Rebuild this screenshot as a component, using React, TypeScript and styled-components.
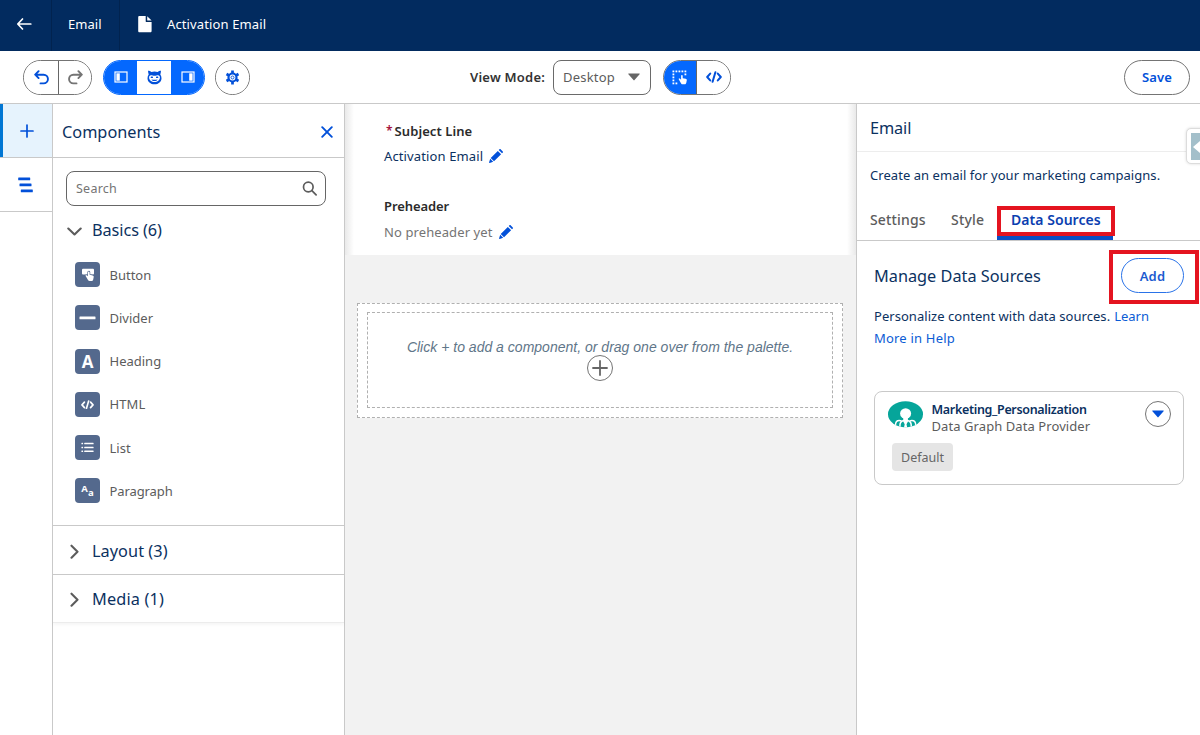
import React from "react";
import styled, { createGlobalStyle, css } from "styled-components";

const Global = createGlobalStyle`
  * { box-sizing: border-box; }
  body { margin: 0; background: #fff; font-family: "Noto Sans", "Open Sans", sans-serif; overflow: hidden; }
  button { font: inherit; margin: 0; padding: 0; background: none; border: 0; }
  svg { display: block; flex: none; }
`;

const navy = "#0b315f";
const blue = "#0250d9";
const bright = "#0468fe";
const grey = "#5c5c5c";
const line = "#c9c9c9";

const Text = styled.span<{ $size?: number; $weight?: number; $color?: string; $track?: number; $lh?: number }>`
  display: block;
  white-space: nowrap;
  font-size: ${(p) => p.$size ?? 13}px;
  font-weight: ${(p) => p.$weight ?? 400};
  color: ${(p) => p.$color ?? navy};
  letter-spacing: ${(p) => p.$track ?? 0}px;
  line-height: ${(p) => p.$lh ?? 20}px;
`;

const Page = styled.div`
  width: 1200px;
  height: 735px;
  display: flex;
  flex-direction: column;
  overflow: hidden;
`;

const TopBar = styled.header`
  height: 51px;
  flex: none;
  display: flex;
  background: #022b5f;
`;

const TopCell = styled.div<{ $width?: number; $last?: boolean }>`
  width: ${(p) => (p.$width ? `${p.$width}px` : "auto")};
  display: flex;
  align-items: center;
  padding: 0 0 3px 16px;
  gap: 14px;
  border-right: ${(p) => (p.$last ? "0" : "1px solid #01234f")};
`;

const Toolbar = styled.div`
  height: 53px;
  flex: none;
  display: flex;
  align-items: center;
  padding: 0 10px 0 23px;
  border-bottom: 1px solid ${line};
`;

const Group = styled.div<{ $left?: number; $blue?: boolean }>`
  height: 35px;
  display: flex;
  margin-left: ${(p) => p.$left ?? 0}px;
  border: 1px solid ${(p) => (p.$blue ? bright : "#747474")};
  border-radius: 18px;
  overflow: hidden;
`;

const GroupButton = styled.button<{ $on?: boolean; $width?: number; $rule?: boolean }>`
  width: ${(p) => p.$width ?? 33}px;
  display: flex;
  align-items: center;
  justify-content: center;
  background: ${(p) => (p.$on ? bright : "#fff")};
  color: ${(p) => (p.$on ? "#fff" : blue)};
  border-right: ${(p) => (p.$rule ? "1px solid #666" : "0")};
`;

const ViewLabel = styled.div`
  margin-left: 220px;
  width: 83px;
`;

const Select = styled.div`
  width: 98px;
  height: 35px;
  display: flex;
  align-items: center;
  justify-content: space-between;
  padding: 0 10px 0 9px;
  border: 1px solid #6a6a6a;
  border-radius: 8px;
`;

const Pill = styled.button<{ $width: number; $color: string }>`
  width: ${(p) => p.$width}px;
  height: 35px;
  display: flex;
  align-items: center;
  justify-content: center;
  border: 1px solid ${(p) => p.$color};
  border-radius: 18px;
`;

const Spacer = styled.div`
  flex: 1;
`;

const Body = styled.div`
  flex: 1;
  display: flex;
  min-height: 0;
`;

const Rail = styled.nav`
  width: 53px;
  border-right: 1px solid ${line};
`;

const RailItem = styled.div<{ $active?: boolean }>`
  height: 54px;
  display: flex;
  align-items: center;
  justify-content: center;
  border-bottom: 1px solid ${line};
  box-shadow: ${(p) => (p.$active ? "inset 3px 0 #0176d3" : "none")};
  background: ${(p) => (p.$active ? "#e6f3fd" : "#fff")};
  padding: 0 2px 0 ${(p) => (p.$active ? 4 : 0)}px;
`;

const Palette = styled.aside`
  width: 292px;
  border-right: 1px solid ${line};
`;

const PaletteHead = styled.div`
  height: 54px;
  display: flex;
  align-items: center;
  justify-content: space-between;
  padding: 2px 11px 0 9px;
  border-bottom: 1px solid ${line};
`;

const SearchBox = styled.div`
  height: 35px;
  margin: 13px 18px 0 13px;
  display: flex;
  align-items: center;
  justify-content: space-between;
  padding: 0 8px 0 9px;
  border: 1px solid #666;
  border-radius: 8px;
`;

const Section = styled.section<{ $last?: boolean }>`
  border-bottom: 1px solid ${(p) => (p.$last ? "#ececec" : line)};
  ${(p) => p.$last && css`box-shadow: 0 2px 3px rgba(0, 0, 0, 0.04);`}
`;

const SectionHead = styled.div<{ $height: number; $drop?: number }>`
  height: ${(p) => p.$height}px;
  display: flex;
  align-items: center;
  gap: 10px;
  padding: ${(p) => p.$drop ?? 0}px 0 0 14px;
`;

const ItemList = styled.div`
  height: 272px;
  padding: 0 0 0 22px;
`;

const Item = styled.div`
  height: 43.25px;
  display: flex;
  align-items: center;
  gap: 9.5px;
`;

const ItemIcon = styled.div`
  width: 25px;
  height: 25px;
  display: flex;
  align-items: center;
  justify-content: center;
  border-radius: 4px;
  background: #54698d;
  color: #fff;
`;

const Glyph = styled.span<{ $size: number; $drop?: number; $lift?: number }>`
  font: 700 ${(p) => p.$size}px/1 "Open Sans", sans-serif;
  padding: ${(p) => p.$drop ?? 0}px 0 ${(p) => p.$lift ?? 0}px;
`;

const Canvas = styled.main`
  width: 511px;
  background: #f2f2f2;
`;

const Subject = styled.div`
  height: 151px;
  background: linear-gradient(to right, #e9e9e9, #fff 9px, #fff 502px, #e9e9e9);
  padding: 17px 39px;
`;

const Line = styled.div<{ $top?: number; $gap?: number }>`
  display: flex;
  align-items: center;
  gap: ${(p) => p.$gap ?? 6}px;
  margin-top: ${(p) => p.$top ?? 0}px;
`;

const FieldMark = styled(Text)`
  padding-left: 2px;
`;

const DropOuter = styled.div`
  width: 486px;
  height: 115px;
  margin: 48px 0 0 12px;
  padding: 8px 9px;
  border: 1px dashed #b0b0b0;
  background: #fff;
`;

const DropInner = styled.div`
  height: 96px;
  display: flex;
  flex-direction: column;
  align-items: center;
  padding-top: 26px;
  border: 1px dashed #b0b0b0;
`;

const Hint = styled.div`
  font: italic 14px/16px "Liberation Sans", sans-serif;
  letter-spacing: 0.01px;
  color: #5f7689;
  white-space: nowrap;
`;

const RoundButton = styled.div`
  width: 26px;
  height: 26px;
  flex: none;
  display: flex;
  align-items: center;
  justify-content: center;
  border: 1px solid #747474;
  border-radius: 50%;
`;

const Inspector = styled.aside`
  position: relative;
  flex: 1;
  min-width: 0;
  border-left: 1px solid ${line};
`;

const InspectorHead = styled.div`
  height: 48px;
  padding: 14px 13px 0;
  border-bottom: 1px solid #ededed;
`;

const Description = styled.div`
  height: 54px;
  padding: 13px 13px 0;
`;

const Tabs = styled.div`
  height: 35px;
  display: flex;
  padding-left: 13px;
  border-bottom: 1px solid ${line};
`;

const Tab = styled.div<{ $width: number }>`
  width: ${(p) => p.$width}px;
  padding-top: 4px;
`;

const ActiveTab = styled.div`
  position: relative;
  width: 116px;
  height: 34px;
  padding: 4px 0 0 14px;
  border-bottom: 4px solid #0b4fc4;
`;

const Callout = styled.div<{ $x: number; $y: number; $w: number; $h: number }>`
  position: absolute;
  left: ${(p) => p.$x}px;
  top: ${(p) => p.$y}px;
  width: ${(p) => p.$w}px;
  height: ${(p) => p.$h}px;
  border: 4px solid #e41420;
`;

const Manage = styled.div`
  height: 61px;
  display: flex;
  align-items: center;
  justify-content: space-between;
  padding: 8px 16px 0 17px;
  position: relative;
`;

const Help = styled.div`
  padding: 4px 17px 0;
`;

const Card = styled.div`
  width: 310px;
  height: 94px;
  margin: 42px 0 0 17px;
  border: 1px solid ${line};
  border-radius: 8px;
  padding: 9px 12px 0 13px;
`;

const CardTop = styled.div`
  display: flex;
  height: 42px;
`;

const CardText = styled.div`
  flex: 1;
  padding-left: 8.5px;
`;

const Badge = styled.div`
  width: 61px;
  height: 28px;
  margin-left: 4px;
  padding-top: 1px;
  display: flex;
  align-items: center;
  justify-content: center;
  border-radius: 4px;
  background: #e5e5e5;
`;

const Flyout = styled.div`
  position: absolute;
  right: -6px;
  top: 24px;
  width: 20px;
  height: 36px;
  padding: 4px;
  background: #fff;
  border: 1px solid #dcdcdc;
  border-radius: 5px;
  box-shadow: 0 0 3px rgba(0, 0, 0, 0.15);
`;

const FlyoutFace = styled.div`
  height: 27px;
  background: #a3bfca;
  display: flex;
  align-items: center;
`;

const Pencil = () => (
  <svg width="15" height="15" viewBox="0 0 15 15" fill={blue}>
    <path d="M8.800 1.900l3.300 3.300-7.100 7.100-3.300-3.300z M9.700 1l.6-.6c.5-.5 1-.5 1.500 0l1.800 1.800c.5.500.5 1 0 1.500l-.6.600z M1.200 9.700l3 3-3.500 1.200c-.4.100-.7-.2-.6-.6z" />
  </svg>
);

const Code = ({ w }: { w: number }) => (
  <svg width={w} height={(w * 12) / 16} viewBox="0 0 16 12" fill="none" stroke="currentColor" strokeWidth="2" strokeLinecap="round" strokeLinejoin="round">
    <path d="M4.200 2.600L1.200 6l3 3.400M11.800 2.600l3 3.400-3 3.400M9.400 1.200L6.600 10.800" />
  </svg>
);

const Caret = ({ color }: { color: string }) => (
  <svg width="12" height="8" viewBox="0 0 12 8" fill={color}>
    <path d="M.8.500h10.400c.5 0 .7.400.4.700L6.500 7.100c-.3.400-.7.400-1 0L.4 1.200C.1.900.3.500.8.500z" />
  </svg>
);

const Chevron = ({ down }: { down?: boolean }) => (
  <svg width="15" height="16" viewBox="0 0 15 16" fill="none" stroke="#5c5c5c" strokeWidth="2.100" strokeLinecap="round" strokeLinejoin="round">
    <path d={down ? "M1.300 6.500l6.200 6 6.200-6" : "M4.500 2.700l6 6-6 6"} />
  </svg>
);

const Hand = "M0 4.300c.4-.7 1.100-.6 1.700-.1l.8.700V.9c0-1.100 1.600-1.100 1.600 0v2.500l3 .6c.8.200 1.200.7 1.100 1.500L7.700 8c-.2.900-.6 1.500-1.500 1.500H4.100c-.7 0-1.200-.3-1.600-.9z";

const icons: Record<string, React.ReactNode> = {
  Button: (
    <svg width="14" height="14" viewBox="0 0 14 14" fill="#fff">
      <rect x="1" y="0.700" width="12" height="5.800" rx="1" />
      <path transform="translate(4.500 3.400)" d={Hand} stroke="#54698d" strokeWidth="1.300" />
      <path transform="translate(4.500 3.400)" d={Hand} />
    </svg>
  ),
  Divider: (
    <svg width="17" height="4" viewBox="0 0 17 4">
      <rect x="0.500" y="0.600" width="16" height="2.600" rx="0.500" fill="#fff" />
    </svg>
  ),
  Heading: <Glyph $size={17}>A</Glyph>,
  HTML: <Code w={13} />,
  List: (
    <svg width="13" height="11" viewBox="0 0 13 11" fill="#fff">
      {[0.8, 4.700, 8.600].map((y) => (
        <React.Fragment key={y}>
          <rect x="0.400" y={y} width="1.700" height="1.500" rx="0.500" />
          <rect x="3.200" y={y} width="9.400" height="1.500" rx="0.500" />
        </React.Fragment>
      ))}
    </svg>
  ),
  Paragraph: (
    <>
      <Glyph $size={9.500} $lift={4}>A</Glyph>
      <Glyph $size={9.500} $drop={3}>a</Glyph>
    </>
  ),
};

const items: [string, number][] = [
  ["Button", 0], ["Divider", 0], ["Heading", 0], ["HTML", 0.1], ["List", 0], ["Paragraph", -0.1],
];

const SidePanel = ({ right }: { right?: boolean }) => (
  <svg width="14" height="12" viewBox="0 0 14 12">
    <rect x="1" y="1" width="12" height="10" fill="none" stroke="#fff" strokeWidth="1.200" />
    <rect x={right ? 8.200 : 2.400} y="2.300" width="3.400" height="7.400" fill="#fff" />
  </svg>
);

export default function App() {
  return (
    <Page>
      <Global />
      <TopBar>
        <TopCell $width={52}>
          <svg width="16" height="14" viewBox="0 0 16 14" fill="none" stroke="#fff" strokeWidth="1.700" strokeLinecap="round" strokeLinejoin="round">
            <path d="M14.800 7H2M6.500 2L1.800 7l4.700 5" />
          </svg>
        </TopCell>
        <TopCell $width={68}>
          <Text $color="#fff" $track={0.05}>Email</Text>
        </TopCell>
        <TopCell $last>
          <svg width="17" height="18" viewBox="0 0 17 18" fill="#fff">
            <path d="M3.500 1h6.200v5.200c0 .6.300.9.900.9h5V16c0 .8-.5 1.300-1.300 1.300H3.500c-.8 0-1.300-.5-1.300-1.300V2.300C2.200 1.500 2.700 1 3.500 1z M11.200 1.200l4.400 4.300h-4.400z" />
          </svg>
          <Text $color="#fff" $track={0.12}>Activation Email</Text>
        </TopCell>
      </TopBar>

      <Toolbar>
        <Group>
          <GroupButton $width={35} $rule>
            <svg width="15" height="15" viewBox="0 0 15 15" fill="none" stroke={blue} strokeWidth="1.900" strokeLinecap="round" strokeLinejoin="round">
              <path d="M4.600 1.200L1.200 4.700l3.400 3.400M1.400 4.700h8.200a4.300 4.300 0 0 1 0 8.700H6.500" />
            </svg>
          </GroupButton>
          <GroupButton $width={32}>
            <svg width="15" height="15" viewBox="0 0 15 15" fill="none" stroke="#747474" strokeWidth="1.900" strokeLinecap="round" strokeLinejoin="round">
              <path d="M10.400 1.200l3.400 3.500-3.400 3.400M13.600 4.700H5.400a4.300 4.300 0 0 0 0 8.700h3.100" />
            </svg>
          </GroupButton>
        </Group>
        <Group $left={11} $blue>
          <GroupButton $on $width={33}><SidePanel /></GroupButton>
          <GroupButton $width={34}>
            <svg width="15" height="15" viewBox="0 0 15 15">
              <path d="M1 .8c1.300 0 2.600.5 3.400 1.300 2-.8 4.200-.8 6.200 0C11.400 1.300 12.700.8 14 .8c-.1 1.500-.3 2.600-.7 3.600.8 1.200 1.200 2.500 1.200 3.800 0 3.500-3 6.100-7 6.100s-7-2.600-7-6.100c0-1.300.4-2.600 1.200-3.800C1.300 3.400 1.100 2.300 1 .8z" fill={blue} />
              <path d="M4 5.300c1.100 0 2 .5 3.500.5s2.400-.5 3.500-.5c1.300 0 1.900 1 1.900 2.100 0 2.500-2.300 4.500-5.400 4.500S2.100 9.900 2.100 7.400c0-1.100.6-2.100 1.900-2.100z" fill="#fff" />
              <rect x="3.700" y="6.600" width="2.300" height="1.500" rx="0.700" fill={blue} />
              <rect x="9" y="6.600" width="2.300" height="1.500" rx="0.700" fill={blue} />
              <path d="M4.500 9.400c2 .5 4 .5 6 0-.4 1.100-1.600 1.500-3 1.500s-2.600-.4-3-1.500z" fill={blue} />
            </svg>
          </GroupButton>
          <GroupButton $on $width={33}><SidePanel right /></GroupButton>
        </Group>
        <Group $left={10}>
          <GroupButton $width={33}>
            <svg width="15" height="15" viewBox="0 0 15 15" fill="none" stroke={blue}>
              <circle cx="7.500" cy="7.500" r="4" strokeWidth="2.200" />
              <circle cx="7.500" cy="7.500" r="1.500" strokeWidth="0.900" />
              <path d="M7.500 .6v3M7.500 11.400v3M1.500 4l2.600 1.500M10.900 9.500l2.600 1.500M1.500 11l2.600-1.500M10.900 5.500L13.500 4" strokeWidth="2.700" />
            </svg>
          </GroupButton>
        </Group>
        <ViewLabel>
          <Text $weight={600} $color="#333" $track={0.22}>View Mode:</Text>
        </ViewLabel>
        <Select>
          <Text $color={grey} $track={0.2}>Desktop</Text>
          <Caret color="#666" />
        </Select>
        <Group $left={12}>
          <GroupButton $on $width={33} $rule>
            <svg width="16" height="15" viewBox="0 0 16 15" fill="#fff">
              {[0, 3, 6, 9, 12].map((n) => <rect key={n} x={n + 0.500} y="0.500" width="1.800" height="1.800" />)}
              {[3, 6, 9, 12].map((n) => <rect key={n} x="0.500" y={n + 0.500} width="1.800" height="1.800" />)}
              <rect x="3.500" y="12.500" width="1.800" height="1.800" />
              <rect x="12.500" y="3.500" width="1.800" height="1.800" />
              <path transform="translate(6.600 4.800)" d={Hand} />
            </svg>
          </GroupButton>
          <GroupButton $width={33}><Code w={16} /></GroupButton>
        </Group>
        <Spacer />
        <Pill $width={66} $color="#747474">
          <Text $weight={600} $color={blue} $track={0.1}>Save</Text>
        </Pill>
      </Toolbar>

      <Body>
        <Rail>
          <RailItem $active>
            <svg width="14" height="14" viewBox="0 0 14 14" stroke={blue} strokeWidth="1.700" strokeLinecap="round"><path d="M7 1v12M1 7h12" /></svg>
          </RailItem>
          <RailItem>
            <svg width="15" height="16" viewBox="0 0 15 16" fill={blue}>
              <rect x="0.200" y="0.500" width="12" height="2.800" rx="0.500" />
              <rect x="1.500" y="6.500" width="12" height="2.800" rx="0.500" />
              <rect x="2.800" y="12.500" width="12" height="2.800" rx="0.500" />
            </svg>
          </RailItem>
        </Rail>

        <Palette>
          <PaletteHead>
            <Text $size={16.300}>Components</Text>
            <svg width="12" height="12" viewBox="0 0 12 12" stroke={blue} strokeWidth="1.900" strokeLinecap="round"><path d="M1.200 1.200l9.600 9.600M10.800 1.200L1.200 10.800" /></svg>
          </PaletteHead>
          <SearchBox>
            <Text $size={12.500} $color="#747474" $track={0.25}>Search</Text>
            <svg width="15" height="15" viewBox="0 0 15 15" fill="none" stroke="#5c5c5c" strokeWidth="1.700" strokeLinecap="round">
              <circle cx="6.300" cy="6" r="4.800" /><path d="M9.900 9.600l4.200 4.300" />
            </svg>
          </SearchBox>
          <Section>
            <SectionHead $height={47}>
              <Chevron down />
              <Text $size={16.300} $track={-0.08}>Basics (6)</Text>
            </SectionHead>
            <ItemList>
              {items.map(([name, track]) => (
                <Item key={name}>
                  <ItemIcon>{icons[name]}</ItemIcon>
                  <Text $color={grey} $track={track}>{name}</Text>
                </Item>
              ))}
            </ItemList>
          </Section>
          <Section>
            <SectionHead $height={48} $drop={2}><Chevron /><Text $size={16.300} $track={0.05}>Layout (3)</Text></SectionHead>
          </Section>
          <Section $last>
            <SectionHead $height={47} $drop={1}><Chevron /><Text $size={16.300} $track={0.15}>Media (1)</Text></SectionHead>
          </Section>
        </Palette>

        <Canvas>
          <Subject>
            <Line $gap={2}>
              <FieldMark $size={12} $weight={600} $color="#a6123d">*</FieldMark>
              <Text $weight={600} $color="#2b2b2b" $track={0.08}>Subject Line</Text>
            </Line>
            <Line $top={5}>
              <Text $track={0.12}>Activation Email</Text>
              <Pencil />
            </Line>
            <Line $top={30}>
              <Text $weight={600} $color="#2b2b2b" $track={-0.1}>Preheader</Text>
            </Line>
            <Line $top={6}>
              <Text $color="#747474" $track={0.1}>No preheader yet</Text>
              <Pencil />
            </Line>
          </Subject>
          <DropOuter>
            <DropInner>
              <Hint>Click + to add a component, or drag one over from the palette.</Hint>
              <RoundButton>
                <svg width="16" height="16" viewBox="0 0 16 16" stroke="#666" strokeWidth="1.800" strokeLinecap="round"><path d="M8 1v14M1 8h14" /></svg>
              </RoundButton>
            </DropInner>
          </DropOuter>
        </Canvas>

        <Inspector>
          <InspectorHead><Text $size={16.300} $track={-0.1}>Email</Text></InspectorHead>
          <Description><Text $track={0.05}>Create an email for your marketing campaigns.</Text></Description>
          <Tabs>
            <Tab $width={81}><Text $size={14} $weight={500} $color={grey} $track={0.15}>Settings</Text></Tab>
            <Tab $width={46}><Text $size={14} $weight={500} $color={grey} $track={0.2}>Style</Text></Tab>
            <ActiveTab>
              <Text $size={14} $weight={600} $color="#0b3fb0" $track={0.05}>Data Sources</Text>
              <Callout $x={0} $y={0} $w={118} $h={30} />
            </ActiveTab>
          </Tabs>
          <Manage>
            <Text $size={16.300}>Manage Data Sources</Text>
            <Pill $width={63} $color="#2a73e8">
              <Text $weight={600} $color="#1b5bd0" $track={0.2}>Add</Text>
            </Pill>
            <Callout $x={252} $y={9} $w={90} $h={54} />
          </Manage>
          <Help>
            <Line $gap={4}>
              <Text $lh={21.500} $track={0.04}>Personalize content with data sources.</Text>
              <Text $lh={21.500} $color="#0b5cd5">Learn</Text>
            </Line>
            <Text $lh={21.500} $color="#0b5cd5" $track={0.2}>More in Help</Text>
          </Help>
          <Card>
            <CardTop>
              <svg width="35" height="27" viewBox="0 0 35 27">
                <defs><clipPath id="oval"><ellipse cx="17.500" cy="13.300" rx="17.500" ry="13" /></clipPath></defs>
                <g clipPath="url(#oval)">
                  <rect width="35" height="27" fill="#06a59a" />
                  <path d="M7.500 27v-3c0-3 1.500-4.500 3.800-4.500 1 0 1.700.3 2.300.8M27.700 27v-3c0-3-1.500-4.500-3.800-4.500-1 0-1.700.3-2.300.8" fill="none" stroke="#fff" strokeWidth="1.400" />
                  <path d="M11.200 27v-2.500c0-3.500 2-6 6.400-6s6.400 2.500 6.400 6V27z" fill="#fff" />
                  <path d="M12.700 27v-2.300c0-2.200.8-3.600 2.500-4.100l1.500 2.600L15.900 27zM22.500 27v-2.300c0-2.200-.8-3.600-2.500-4.100l-1.500 2.600.8 3.800z" fill="#06a59a" />
                  <ellipse cx="17.600" cy="12.600" rx="5.500" ry="5.300" fill="#fff" />
                  <path d="M15.300 16h4.600v3.500h-4.600z" fill="#fff" />
                </g>
              </svg>
              <CardText>
                <Text $size={12.500} $weight={600} $lh={17} $track={-0.32}>Marketing_Personalization</Text>
                <Text $color={grey} $lh={16} $track={0.08}>Data Graph Data Provider</Text>
              </CardText>
              <RoundButton>
                <Caret color={blue} />
              </RoundButton>
            </CardTop>
            <Badge><Text $size={12.500} $color="#666">Default</Text></Badge>
          </Card>
          <Flyout>
            <FlyoutFace>
              <svg width="10" height="14" viewBox="0 0 10 14" fill="#fff"><path d="M2 7l7-6v12z" /></svg>
            </FlyoutFace>
          </Flyout>
        </Inspector>
      </Body>
    </Page>
  );
}
